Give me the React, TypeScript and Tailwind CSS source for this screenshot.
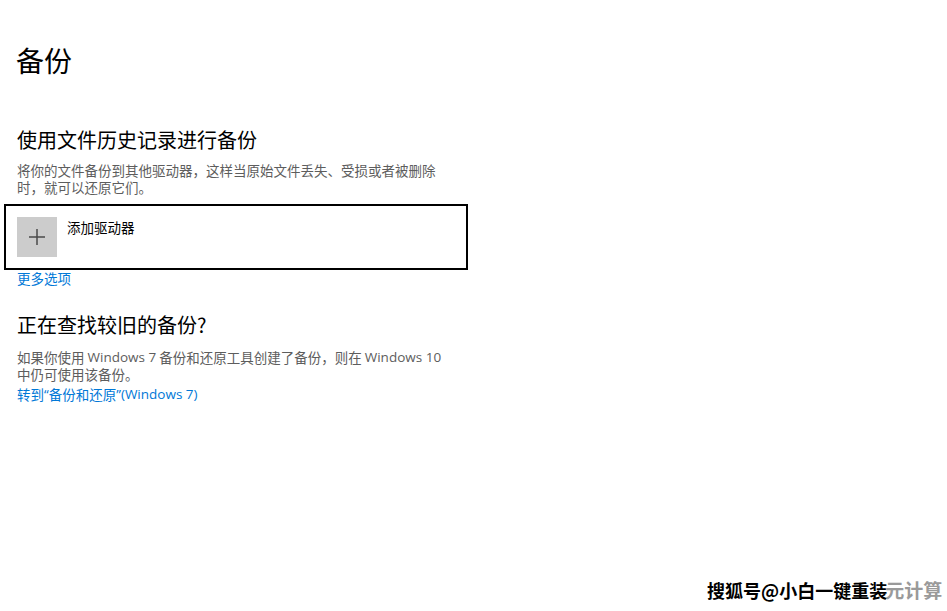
import React from "react";

const font = { fontFamily: '"Noto Sans CJK SC", "Noto Sans", sans-serif' };
const latin = { fontFamily: '"Open Sans", "Noto Sans", sans-serif' };

function L({ children }: { children: React.ReactNode }) {
  return (
    <span className="inline-block leading-[17px] align-top" style={latin}>
      {children}
    </span>
  );
}

export default function App() {
  return (
    <div className="relative w-[947px] h-[611px] bg-white overflow-hidden text-black" style={font}>
      <div className="flex flex-col pt-[42px] w-[470px]">
        <h1 className="pl-[16px] text-[28px] leading-[36px] font-normal">备份</h1>
        <h2 className="pl-[17px] mt-[48px] text-[20px] leading-[28px] font-normal">使用文件历史记录进行备份</h2>
        <p className="pl-[17px] mt-[8px] text-[13.5px] leading-[17px] text-[#5d5d5d] w-[460px]">
          将你的文件备份到其他驱动器，这样当原始文件丢失、受损或者被删除时，就可以还原它们。
        </p>
        <div className="ml-[4px] mt-[8px] w-[464px] h-[66px] border-2 border-black flex items-start pt-[11px] pl-[11px] gap-[10px]">
          <div className="w-[40px] h-[40px] bg-[#cccccc] flex items-center justify-center">
            <svg width="18" height="18" viewBox="0 0 18 18">
              <path d="M9 1v16M1 9h16" stroke="#4a4a4a" strokeWidth="1.5" fill="none" />
            </svg>
          </div>
          <div className="text-[13.5px] leading-[17px] pt-[2px]">添加驱动器</div>
        </div>
        <a className="pl-[17px] text-[13.5px] leading-[17px] text-[#0078d7]">更多选项</a>
        <h2 className="pl-[17px] mt-[24px] text-[20px] leading-[28px] font-normal">正在查找较旧的备份?</h2>
        <p className="pl-[17px] mt-[10px] text-[13.5px] leading-[17px] text-[#5d5d5d] w-[452px]">
          如果你使用 <L>Windows 7</L> 备份和还原工具创建了备份，则在 <L>Windows 10</L> 中仍可使用该备份。
        </p>
        <a className="pl-[17px] mt-[3px] text-[13.5px] leading-[17px] text-[#0078d7]">
          转到<L>“</L>备份和还原<L>”(Windows 7)</L>
        </a>
      </div>
      <div className="absolute left-[707px] top-[578px] flex items-center whitespace-nowrap text-[18px] leading-[24px] font-semibold">
        <span
          className="text-black"
          style={{ textShadow: "0 0 2px #fff, 0 0 2px #fff, 1px 1px 0 #fff, -1px -1px 0 #fff" }}
        >
          搜狐号@小白一键重装
        </span>
        <span className="ml-[-2px] text-[#9a9a9a] text-[19px] font-bold">元计算</span>
      </div>
    </div>
  );
}
